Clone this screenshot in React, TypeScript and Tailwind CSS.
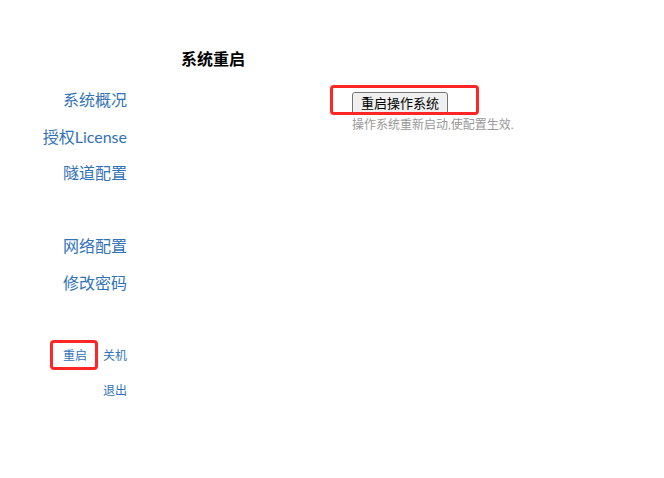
const font = { fontFamily: 'Lato, "Noto Sans CJK SC", sans-serif' };

const navItems = ["系统概况", "授权License", "隧道配置", "", "网络配置", "修改密码", ""];

export default function App() {
  return (
    <div
      className="relative w-[664px] h-[478px] bg-white pt-[48px] text-[#333]"
      style={font}
    >
      <div className="pl-[181px] text-[16px] leading-[22px] font-bold text-black">
        系统重启
      </div>

      <div className="flex mt-[12px]">
        <nav className="w-[127px] text-right text-[16px] text-[#3272b8]">
          {navItems.map((item, i) => (
            <div key={i} className="h-[36.5px] leading-[36.5px]">
              {item}
            </div>
          ))}
          <div className="flex justify-end gap-4 text-[12px] leading-[35px]">
            <a className="cursor-pointer">重启</a>
            <a className="cursor-pointer">关机</a>
          </div>
          <div className="text-[12px] leading-[35px]">
            <a className="cursor-pointer">退出</a>
          </div>
        </nav>

        <main className="pl-[225px] pt-[8px]">
          <button className="h-[23px] px-[8px] text-[13px] leading-none text-black bg-[#efefef] border border-[#767676] rounded-[3px]">
            重启操作系统
          </button>
          <p className="mt-[2px] text-[12px] leading-[16px] text-[#999]">
            操作系统重新启动,使配置生效.
          </p>
        </main>
      </div>

      {/* annotation boxes */}
      <div className="absolute left-[330px] top-[85px] w-[149px] h-[30px] border-[3px] border-[#ff2626] rounded-[4px]" />
      <div className="absolute left-[50px] top-[340px] w-[48px] h-[30px] border-[3px] border-[#ff2626] rounded-[4px]" />
    </div>
  );
}
